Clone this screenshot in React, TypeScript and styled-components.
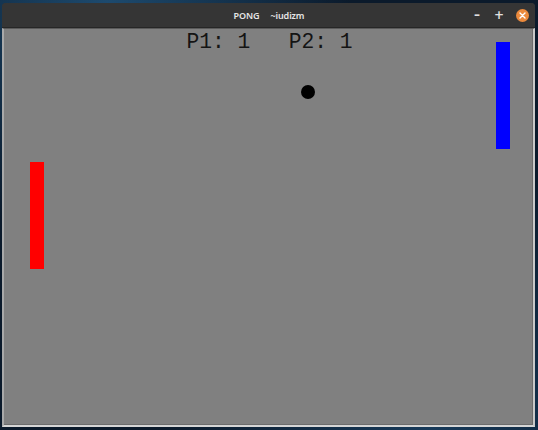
import React from "react";
import styled, { createGlobalStyle } from "styled-components";

const Global = createGlobalStyle`
  html, body { margin: 0; padding: 0; }
  body {
    width: 538px;
    height: 430px;
    overflow: hidden;
    background:
      radial-gradient(ellipse at 20% 0%, #1d4a6e 0%, transparent 40%),
      radial-gradient(ellipse at 80% 100%, #173a5a 0%, transparent 45%),
      #0b1a2b;
  }
`;

const Desktop = styled.div`
  width: 538px;
  height: 430px;
  padding: 3px 3px 0 2px;
  box-sizing: border-box;
`;

const Window = styled.div`
  width: 533px;
  display: flex;
  flex-direction: column;
  background: #3a3a3a;
  border-radius: 4px 4px 0 0;
`;

const TitleBar = styled.div`
  height: 25px;
  display: flex;
  align-items: center;
  position: relative;
  background: #353535;
  border-radius: 4px 4px 0 0;
  border-bottom: 1px solid #262626;
  box-sizing: border-box;
`;

const Title = styled.div`
  flex: 1;
  display: flex;
  justify-content: center;
  gap: 11px;
  padding-left: 1px;
  font-family: "Noto Sans", "Open Sans", sans-serif;
  font-weight: 600;
  font-size: 9px;
  letter-spacing: -0.1px;
  color: #e6e6e6;
`;

const Controls = styled.div`
  position: absolute;
  right: 6px;
  top: 0;
  height: 100%;
  display: flex;
  align-items: center;
  gap: 12px;
`;

const CtrlGlyph = styled.span`
  width: 10px;
  text-align: center;
  font-family: "DejaVu Sans", sans-serif;
  font-weight: bold;
  font-size: 12px;
  color: #e0e0e0;
  line-height: 1;
`;

const CloseBtn = styled.span`
  width: 13px;
  height: 13px;
  border-radius: 50%;
  background: #ec8a3c;
  display: flex;
  align-items: center;
  justify-content: center;
`;

const Frame = styled.div`
  border-left: 2px solid #a9a9a9;
  border-right: 2px solid #c8c8c8;
  border-bottom: 2px solid #d6d6d6;
  border-top: 1px solid #5a5a5a;
  background: #6c6c6c;
  padding: 0 1px 1px 0;
`;

const Canvas = styled.div`
  position: relative;
  height: 395px;
  background: #808080;
  overflow: hidden;
`;

const Score = styled.div`
  display: flex;
  justify-content: center;
  padding-top: 1px;
  padding-left: 3px;
  font-family: "Liberation Mono", "Courier New", monospace;
  font-size: 21.3px;
  line-height: 24px;
  color: #141414;
  white-space: pre;
`;

const Paddle = styled.div<{ $color: string }>`
  position: absolute;
  width: 14px;
  height: 107px;
  background: ${(p) => p.$color};
`;

const Ball = styled.div`
  position: absolute;
  width: 14px;
  height: 14px;
  border-radius: 50%;
  background: #000;
`;

export default function App() {
  return (
    <>
      <Global />
      <Desktop>
        <Window>
          <TitleBar>
            <Title>
              <span>PONG</span>
              <span>~iudizm</span>
            </Title>
            <Controls>
              <CtrlGlyph>–</CtrlGlyph>
              <CtrlGlyph>+</CtrlGlyph>
              <CloseBtn>
                <svg width="7" height="7" viewBox="0 0 7 7">
                  <path d="M1 1L6 6M6 1L1 6" stroke="#fff" strokeWidth="1.4" strokeLinecap="round" />
                </svg>
              </CloseBtn>
            </Controls>
          </TitleBar>
          <Frame>
            <Canvas>
              <Score>{"P1: 1   P2: 1"}</Score>
              <Paddle $color="#ff0000" style={{ left: 26, top: 133 }} />
              <Paddle $color="#0000ff" style={{ left: 492, top: 13 }} />
              <Ball style={{ left: 297, top: 56 }} />
            </Canvas>
          </Frame>
        </Window>
      </Desktop>
    </>
  );
}
